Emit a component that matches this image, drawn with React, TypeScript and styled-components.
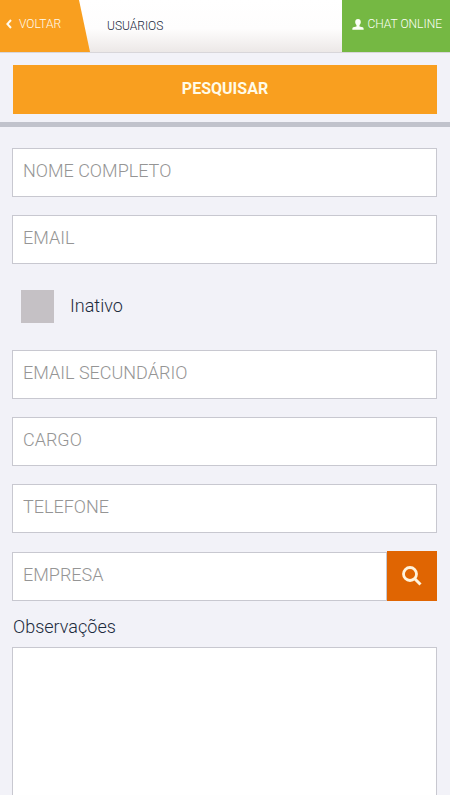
import React from "react";
import styled, { createGlobalStyle } from "styled-components";

const GlobalStyle = createGlobalStyle`
  *, *::before, *::after { box-sizing: border-box; }
  body {
    margin: 0;
    background: #fefefe;
    font-family: Roboto, "Liberation Sans", sans-serif;
    color: #1c2b3d;
  }
  button, input, textarea { font: inherit; border-radius: 0; }
`;

const Page = styled.div`
  background: #f2f2f8;
`;

const Header = styled.header`
  display: flex;
  align-items: stretch;
  height: 53px;
  background: linear-gradient(#ffffff 0%, #fefdfd 55%, #ece8e7 100%);
  border-bottom: 1px solid #d8d6da;
`;

const BackLink = styled.a`
  display: flex;
  align-items: center;
  gap: 7px;
  width: 90px;
  padding: 0 0 4px 6px;
  background: #f99f1f;
  clip-path: polygon(0 0, 79px 0, 100% 100%, 0 100%);
  color: #fffbee;
  font-size: 12px;
  line-height: 16px;
  font-weight: 300;
  text-decoration: none;
`;

const Title = styled.h1`
  flex: 1;
  align-self: center;
  margin: 0;
  padding-left: 17px;
  font-size: 12px;
  line-height: 16px;
  font-weight: 300;
`;

const ChatLink = styled.a`
  display: flex;
  align-items: center;
  gap: 3px;
  padding: 0 8px 4px 10px;
  background: #75b843;
  color: #fcfff6;
  font-size: 12px;
  line-height: 16px;
  font-weight: 300;
  text-decoration: none;
`;

const SearchBar = styled.div`
  padding: 12px 13px 8px;
  border-bottom: 5px solid #c1c3cc;
`;

const SubmitButton = styled.button`
  display: block;
  width: 100%;
  height: 49px;
  padding: 0 0 2px;
  border: 0;
  background: #f99f1f;
  color: #fffbe8;
  font-size: 16px;
  font-weight: 700;
  cursor: pointer;
`;

const Form = styled.form`
  display: flex;
  flex-direction: column;
  gap: 18px;
  padding: 21px 13px 0 12px;
`;

const TextField = styled.input`
  display: block;
  width: 100%;
  min-width: 0;
  height: 49px;
  padding: 0 10px 4px;
  border: 1px solid #c8c8d0;
  background: #fff;
  color: #1c2b3d;
  font-size: 18px;
  font-weight: 300;
  &::placeholder { color: #959595; opacity: 1; }
`;

const CheckLabel = styled.label`
  display: flex;
  align-items: center;
  gap: 16px;
  height: 50px;
  padding: 0 0 1px 9px;
  font-size: 18px;
  font-weight: 300;
`;

const CheckBox = styled.input`
  appearance: none;
  width: 33px;
  height: 33px;
  margin: 0;
  background: #c5c1c5;
  &:checked { background: #f99f1f; }
`;

const CheckText = styled.span`
  padding-bottom: 2px;
`;

const LookupRow = styled.div`
  display: flex;
  align-items: flex-end;
  height: 50px;
`;

const LookupButton = styled.button`
  display: flex;
  flex: none;
  align-items: center;
  justify-content: center;
  width: 50px;
  height: 50px;
  padding: 0;
  border: 0;
  background: #e06502;
  color: #fff3dd;
  cursor: pointer;
`;

const Notes = styled.div`
  display: flex;
  flex-direction: column;
  gap: 12px;
`;

const NotesLabel = styled.label`
  padding-left: 1px;
  font-size: 18px;
  line-height: 16px;
  font-weight: 300;
`;

const NotesArea = styled.textarea`
  display: block;
  width: 100%;
  height: 148px;
  padding: 10px;
  border: 1px solid #c8c8d0;
  border-bottom: 0;
  background: #fff;
  resize: none;
`;

const fieldsTop = [
  { name: "nome", type: "text", label: "NOME COMPLETO" },
  { name: "email", type: "email", label: "EMAIL" },
];

const fieldsBottom = [
  { name: "email2", type: "email", label: "EMAIL SECUNDÁRIO" },
  { name: "cargo", type: "text", label: "CARGO" },
  { name: "telefone", type: "tel", label: "TELEFONE" },
];

const ChevronIcon = () => (
  <svg width="6" height="10" viewBox="0 0 6 10" aria-hidden="true">
    <path d="M5 1 1.400 5 5 9" fill="none" stroke="currentColor" strokeWidth="2" />
  </svg>
);

const PersonIcon = () => (
  <svg width="12" height="12" viewBox="0 0 12 12" aria-hidden="true">
    <path
      d="M6 1C4.200 1 3.200 2.200 3.200 3.900c0 1.500.6 2.400 1.300 3V8.400L1.300 9.300C.6 9.600.3 10.200.3 11.800h11.400c0-1.600-.3-2.200-1-2.500L7.500 8.400V6.900c.7-.6 1.300-1.500 1.300-3C8.800 2.200 7.800 1 6 1Z"
      fill="currentColor"
    />
  </svg>
);

const SearchIcon = () => (
  <svg width="20" height="20" viewBox="0 0 20 20" aria-hidden="true">
    <circle cx="8" cy="8" r="6.500" fill="none" stroke="currentColor" strokeWidth="2.800" />
    <path d="m12.500 12.500 6 6" fill="none" stroke="currentColor" strokeWidth="3" />
  </svg>
);

export default function App() {
  return (
    <>
      <GlobalStyle />
      <Page>
        <Header>
          <BackLink href="#voltar">
            <ChevronIcon />
            VOLTAR
          </BackLink>
          <Title>USUÁRIOS</Title>
          <ChatLink href="#chat">
            <PersonIcon />
            CHAT ONLINE
          </ChatLink>
        </Header>
        <SearchBar>
          <SubmitButton type="submit" form="usuario">PESQUISAR</SubmitButton>
        </SearchBar>
        <Form id="usuario" onSubmit={(e) => e.preventDefault()}>
          {fieldsTop.map((f) => (
            <TextField key={f.name} name={f.name} type={f.type} placeholder={f.label} aria-label={f.label} />
          ))}
          <CheckLabel>
            <CheckBox type="checkbox" name="inativo" />
            <CheckText>Inativo</CheckText>
          </CheckLabel>
          {fieldsBottom.map((f) => (
            <TextField key={f.name} name={f.name} type={f.type} placeholder={f.label} aria-label={f.label} />
          ))}
          <LookupRow>
            <TextField name="empresa" type="text" placeholder="EMPRESA" aria-label="EMPRESA" />
            <LookupButton type="button" aria-label="Buscar empresa">
              <SearchIcon />
            </LookupButton>
          </LookupRow>
          <Notes>
            <NotesLabel htmlFor="observacoes">Observações</NotesLabel>
            <NotesArea id="observacoes" name="observacoes" />
          </Notes>
        </Form>
      </Page>
    </>
  );
}
